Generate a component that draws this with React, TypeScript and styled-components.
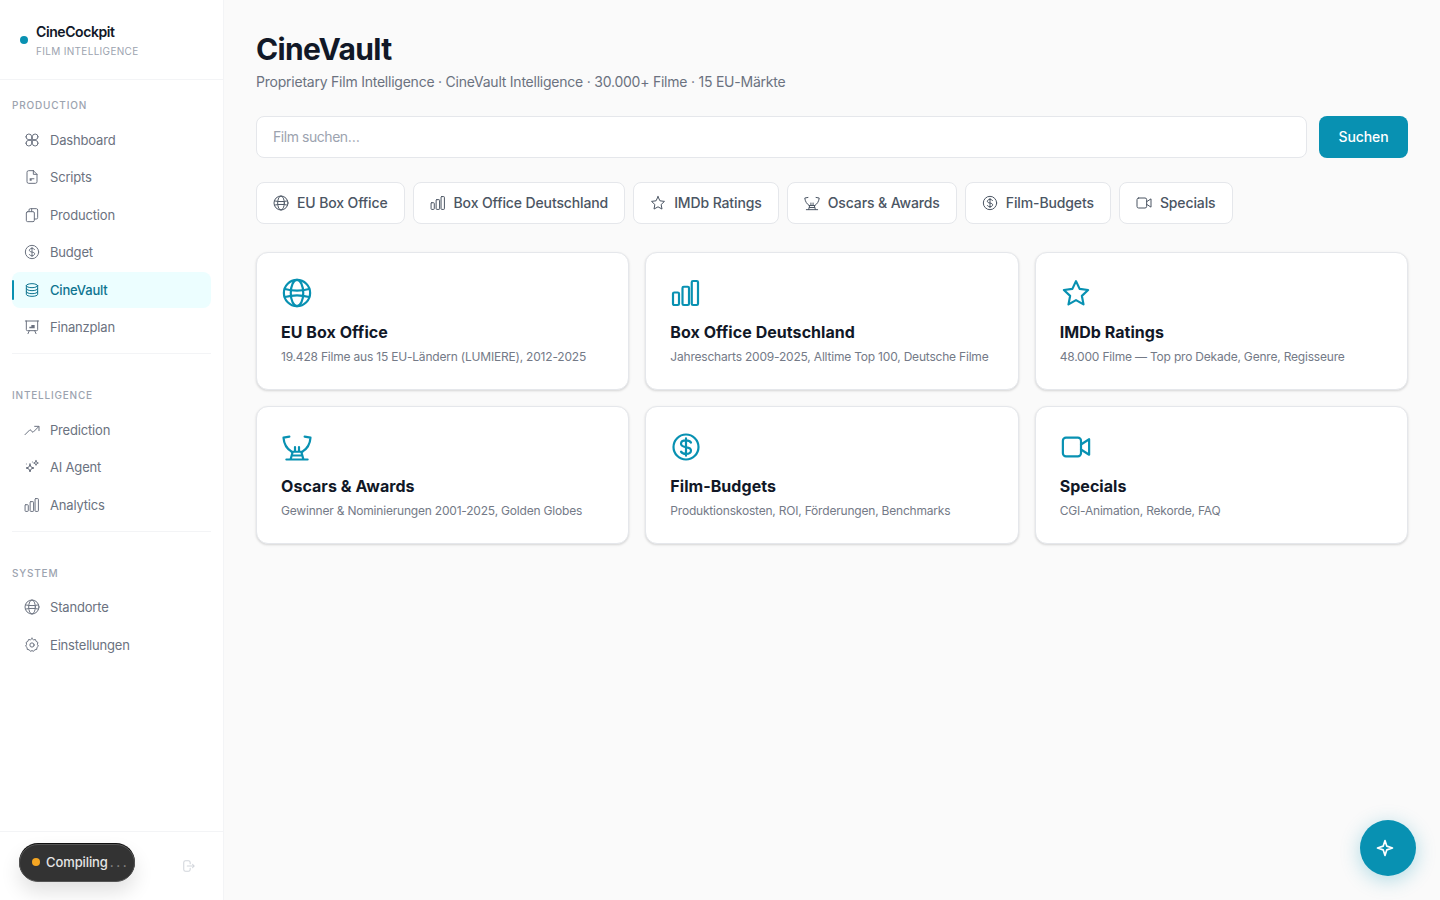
import React from "react";
import styled, { createGlobalStyle } from "styled-components";

const Global = createGlobalStyle`
  html, body { margin: 0; padding: 0; height: 100%; }
  body { font-family: Inter, "Noto Sans", sans-serif; background: #fafafa; color: #111827; }
  * { box-sizing: border-box; }
`;

type IconName =
  | "apps" | "file" | "copy" | "dollar" | "db" | "board" | "trend" | "sparks"
  | "bars" | "globe" | "gear" | "logout" | "star" | "trophy" | "video" | "spark";

const paths: Record<IconName, React.ReactNode> = {
  apps: (
    <>
      <path d="M3 7.250a4.250 4.250 0 1 1 8.500 0v4.250H7.250A4.250 4.250 0 0 1 3 7.250Z" />
      <path d="M21 7.250a4.250 4.250 0 1 0-8.500 0v4.250h4.250A4.250 4.250 0 0 0 21 7.250Z" />
      <path d="M3 16.750a4.250 4.250 0 1 0 8.500 0V12.500H7.250A4.250 4.250 0 0 0 3 16.750Z" />
      <path d="M21 16.750a4.250 4.250 0 1 1-8.500 0V12.500h4.250A4.250 4.250 0 0 1 21 16.750Z" />
    </>
  ),
  file: (
    <>
      <path d="M14 2.500H7a2.500 2.500 0 0 0-2.500 2.500v14A2.500 2.500 0 0 0 7 21.500h10a2.500 2.500 0 0 0 2.500-2.500V8L14 2.500Z" />
      <path d="M14 2.500V8h5.500" />
      <path d="M8.500 17.500v-3.500h7v1.500h-4v2Z" fill="currentColor" stroke="none" />
    </>
  ),
  copy: (
    <>
      <rect x="3.500" y="7" width="12" height="15" rx="2" />
      <path d="M7.500 7V4.500a2 2 0 0 1 2-2h9a2 2 0 0 1 2 2V16a2 2 0 0 1-2 2h-3" />
      <path d="M11.500 7V2.500" />
    </>
  ),
  dollar: (
    <>
      <circle cx="12" cy="12" r="10" />
      <path d="M16 8.500c-.6-1.100-2.100-1.800-4-1.800-2.300 0-4 1.100-4 2.700s1.600 2.300 4 2.700 4 1.100 4 2.700-1.700 2.700-4 2.700c-1.900 0-3.400-.7-4-1.800M12 5v14" />
    </>
  ),
  db: (
    <>
      <ellipse cx="12" cy="5.500" rx="8.500" ry="3" />
      <path d="M3.500 5.500v13c0 1.700 3.800 3 8.500 3s8.500-1.300 8.500-3v-13" />
      <path d="M3.500 10c0 1.700 3.800 3 8.500 3s8.500-1.300 8.500-3M3.500 14.500c0 1.700 3.800 3 8.500 3s8.500-1.300 8.500-3" />
    </>
  ),
  board: (
    <>
      <path d="M2 3h20" />
      <path d="M3.500 3v13a1.500 1.500 0 0 0 1.500 1.500h14a1.500 1.500 0 0 0 1.500-1.500V3" />
      <path d="M8 17.500 6 22M16 17.500l2 4.500" />
      <path d="M8 14v-2.500h3V9h5v5H8Z" fill="currentColor" stroke="none" />
    </>
  ),
  trend: (
    <>
      <path d="M1.500 19 9 11.500l4.500 4L22 7" />
      <path d="M16 6.500h6.500V13" />
    </>
  ),
  sparks: (
    <>
      <path d="M9 7.500l1.500 4.500L15 13.500l-4.500 1.500L9 19.500 7.500 15 3 13.500 7.500 12 9 7.500Z" />
      <path d="M18 2.500l1 2.500 2.500 1-2.500 1-1 2.500-1-2.500-2.500-1 2.500-1 1-2.500Z" />
      <path d="M3.500 7.500h.01M12.500 4.500h.01" />
    </>
  ),
  bars: (
    <>
      <rect x="1.600" y="11.600" width="4.800" height="10" rx="1" />
      <rect x="9.200" y="7" width="5.200" height="14.600" rx="1" />
      <rect x="16.600" y="2.400" width="5" height="19.200" rx="1" />
    </>
  ),
  globe: (
    <>
      <circle cx="12" cy="12" r="10.500" />
      <ellipse cx="12" cy="12" rx="5" ry="10.500" />
      <path d="M2.300 8.800c5.500 1.500 13.900 1.500 19.400 0M2.300 15.200c5.500-1.500 13.900-1.500 19.400 0" />
    </>
  ),
  gear: (
    <>
      <path d="M12 2.200l2.200 2 3-.4 1 2.800 2.600 1.500-.7 3 1.500 2.600-2.200 2-.3 3-3 .5-1.900 2.400L12 20.300l-2.200 1.300-1.900-2.400-3-.5-.3-3-2.200-2 1.500-2.600-.7-3 2.600-1.500 1-2.800 3 .4 2.200-2Z" />
      <circle cx="12" cy="12" r="3.200" />
    </>
  ),
  logout: (
    <>
      <path d="M14 8V6a3 3 0 0 0-3-3H6a3 3 0 0 0-3 3v12a3 3 0 0 0 3 3h5a3 3 0 0 0 3-3v-2" />
      <path d="M9 12h12M18 9l3 3-3 3" />
    </>
  ),
  star: (
    <path d="M12 2.500l2.900 6.200 6.800.9-5 4.700 1.300 6.800-6-3.400-6 3.400 1.300-6.800-5-4.700 6.800-.9L12 2.500Z" />
  ),
  trophy: (
    <>
      <path d="M5.900 3.700 1.200 4.500C1.500 9 4 13.500 7.700 15.700" />
      <path d="M18.100 3.700l4.700.8C22.500 9 20 13.500 16.300 15.700" />
      <path d="M7.700 15.800h8.600M10.400 12v3.800M13.600 12v3.800" />
      <path d="M8.500 16l-1.500 5.500M15.500 16l1.500 5.500M8 18.800h8M3.500 22h17" />
    </>
  ),
  video: (
    <>
      <rect x="1.500" y="4.500" width="14.500" height="15" rx="2.500" />
      <path d="M16 10l6.500-4.200v12.400L16 14" />
    </>
  ),
  spark: (
    <path d="M12 3l2.200 6.800L21 12l-6.800 2.200L12 21l-2.200-6.800L3 12l6.800-2.200L12 3Z" />
  ),
};

const Svg = styled.svg<{ $size: number; $weight: number }>`
  width: ${(p) => p.$size}px;
  height: ${(p) => p.$size}px;
  flex: none;
  fill: none;
  stroke: currentColor;
  stroke-width: ${(p) => p.$weight};
  stroke-linecap: round;
  stroke-linejoin: round;
`;

const Icon = ({ name, size = 16, weight = 1.5 }: { name: IconName; size?: number; weight?: number }) => (
  <Svg viewBox="0 0 24 24" $size={size} $weight={weight}>
    {paths[name]}
  </Svg>
);

const Page = styled.div`
  display: flex;
  width: 1440px;
  height: 900px;
  overflow: hidden;
  position: relative;
`;

const Sidebar = styled.aside`
  width: 224px;
  flex: none;
  background: #fff;
  border-right: 1px solid #f3f4f6;
  display: flex;
  flex-direction: column;
`;

const Brand = styled.div`
  height: 80px;
  flex: none;
  border-bottom: 1px solid #f3f4f6;
  display: flex;
  align-items: center;
  gap: 8px;
  padding-left: 20px;
`;

const BrandDot = styled.span`
  width: 8px;
  height: 8px;
  border-radius: 50%;
  background: #0891b2;
`;

const BrandText = styled.div`
  display: flex;
  flex-direction: column;
  gap: 2px;
  padding-top: 1px;
`;

const BrandName = styled.div`
  font-size: 14px;
  line-height: 20px;
  font-weight: 600;
  letter-spacing: -0.42px;
  color: #111827;
`;

const BrandSub = styled.div`
  font-size: 10px;
  line-height: 14px;
  letter-spacing: 0.32px;
  color: #9ca3af;
`;

const Nav = styled.nav`
  flex: 1;
  padding: 16px 12px 0;
`;

const Section = styled.section<{ $last?: boolean }>`
  padding-bottom: 7.5px;
  margin-bottom: 32px;
  border-bottom: ${(p) => (p.$last ? "none" : "1px solid #f3f4f6")};
`;

const SectionLabel = styled.div`
  font-size: 10px;
  line-height: 18px;
  font-weight: 500;
  letter-spacing: 0.8px;
  color: #9ca3af;
  margin-bottom: 8px;
`;

const NavList = styled.div`
  display: flex;
  flex-direction: column;
  gap: 1.5px;
`;

const NavItem = styled.a<{ $active?: boolean }>`
  position: relative;
  height: 36px;
  display: flex;
  align-items: center;
  gap: 10px;
  padding: 0 0 1px 12px;
  border-radius: 8px;
  font-size: 13px;
  letter-spacing: -0.18px;
  color: ${(p) => (p.$active ? "#0e7490" : "#6b7280")};
  font-weight: ${(p) => (p.$active ? 500 : 400)};
  background: ${(p) => (p.$active ? "#ecfeff" : "transparent")};
  &::before {
    content: "";
    display: ${(p) => (p.$active ? "block" : "none")};
    position: absolute;
    left: 0;
    top: 8px;
    bottom: 8px;
    width: 2px;
    background: #0891b2;
    border-radius: 1px;
  }
`;

const SideFooter = styled.div`
  height: 69px;
  flex: none;
  border-top: 1px solid #f3f4f6;
  display: flex;
  align-items: center;
  justify-content: space-between;
  padding: 0 27px 0 19px;
  color: #d1d5db;
`;

const Pill = styled.div`
  width: 116px;
  height: 38px;
  border-radius: 19px;
  background: #333;
  border: 1px solid #555;
  box-shadow: 0 10px 20px rgba(0, 0, 0, 0.12), 0 -1px 0 #111;
  display: flex;
  align-items: center;
  gap: 6px;
  padding: 0 0 1px 12px;
  margin-top: -7px;
  font-size: 13px;
  font-weight: 500;
  letter-spacing: -0.1px;
  color: #e5e5e5;
  white-space: nowrap;
`;

const PillDot = styled.span`
  width: 8px;
  height: 8px;
  border-radius: 50%;
  background: #f5a623;
`;

const Dots = styled.span`
  margin-left: 2px;
  letter-spacing: 2.6px;
  color: #8a8a8a;
`;

const LogoutWrap = styled.span`
  display: flex;
  margin-top: -1px;
`;

const Main = styled.main`
  flex: 1;
  min-width: 0;
  padding: 32px;
`;

const Title = styled.h1`
  margin: 0;
  font-size: 30px;
  line-height: 35px;
  font-weight: 700;
  letter-spacing: -0.65px;
  color: #111827;
`;

const Subtitle = styled.p`
  margin: 5px 0 0;
  font-size: 14px;
  line-height: 20px;
  letter-spacing: -0.23px;
  color: #6b7280;
`;

const SearchRow = styled.form`
  display: flex;
  gap: 12px;
  margin-top: 24px;
`;

const SearchInput = styled.input`
  flex: 1;
  height: 42px;
  border: 1px solid #e5e7eb;
  border-radius: 8px;
  background: #fff;
  padding: 0 16px 2px;
  font: 400 14px Inter, sans-serif;
  letter-spacing: -0.45px;
  color: #111827;
  outline: none;
  &::placeholder { color: #9ca3af; opacity: 1; }
`;

const SearchButton = styled.button`
  width: 89px;
  height: 42px;
  border: none;
  border-radius: 8px;
  padding: 0 0 1px;
  background: #0891b2;
  color: #fff;
  font: 500 14px Inter, sans-serif;
  letter-spacing: -0.1px;
`;

const Tabs = styled.div`
  display: flex;
  gap: 8px;
  margin-top: 24px;
`;

const Tab = styled.button`
  height: 42px;
  display: flex;
  align-items: center;
  gap: 8px;
  padding: 0 16px 1px;
  background: #fff;
  border: 1px solid #e5e7eb;
  border-radius: 8px;
  color: #4b5563;
  font: 500 14px Inter, sans-serif;
  letter-spacing: -0.12px;
`;

const Grid = styled.div`
  display: grid;
  grid-template-columns: repeat(3, 1fr);
  gap: 16px;
  margin-top: 28px;
`;

const Card = styled.article`
  height: 138px;
  padding: 24px;
  background: #fff;
  border: 1px solid #e5e7eb;
  border-radius: 12px;
  box-shadow: 0 1px 3px rgba(0, 0, 0, 0.1), 0 1px 2px rgba(0, 0, 0, 0.06);
`;

const CardIcon = styled.div`
  height: 30px;
  margin: 1px 0 0 1px;
  display: flex;
  color: #0891b2;
`;

const CardTitle = styled.h3`
  margin: 12px 0 0;
  font-size: 16px;
  line-height: 24px;
  font-weight: 700;
  letter-spacing: 0.05px;
  color: #111827;
`;

const CardDesc = styled.p`
  margin: 5px 0 0;
  font-size: 12px;
  line-height: 16px;
  letter-spacing: -0.2px;
  color: #747a87;
`;

const Fab = styled.button`
  position: absolute;
  left: 1360px;
  top: 820px;
  width: 56px;
  height: 56px;
  padding: 0 6px 0 0;
  border: none;
  border-radius: 50%;
  background: #0891b2;
  color: #fff;
  display: flex;
  align-items: center;
  justify-content: center;
  box-shadow: 0 4px 20px rgba(8, 145, 178, 0.3);
`;

const navSections: { label: string; items: { name: string; icon: IconName; active?: boolean }[] }[] = [
  {
    label: "PRODUCTION",
    items: [
      { name: "Dashboard", icon: "apps" },
      { name: "Scripts", icon: "file" },
      { name: "Production", icon: "copy" },
      { name: "Budget", icon: "dollar" },
      { name: "CineVault", icon: "db", active: true },
      { name: "Finanzplan", icon: "board" },
    ],
  },
  {
    label: "INTELLIGENCE",
    items: [
      { name: "Prediction", icon: "trend" },
      { name: "AI Agent", icon: "sparks" },
      { name: "Analytics", icon: "bars" },
    ],
  },
  {
    label: "SYSTEM",
    items: [
      { name: "Standorte", icon: "globe" },
      { name: "Einstellungen", icon: "gear" },
    ],
  },
];

const cards: { title: string; desc: string; icon: IconName }[] = [
  { title: "EU Box Office", desc: "19.428 Filme aus 15 EU-Ländern (LUMIERE), 2012-2025", icon: "globe" },
  { title: "Box Office Deutschland", desc: "Jahrescharts 2009-2025, Alltime Top 100, Deutsche Filme", icon: "bars" },
  { title: "IMDb Ratings", desc: "48.000 Filme — Top pro Dekade, Genre, Regisseure", icon: "star" },
  { title: "Oscars & Awards", desc: "Gewinner & Nominierungen 2001-2025, Golden Globes", icon: "trophy" },
  { title: "Film-Budgets", desc: "Produktionskosten, ROI, Förderungen, Benchmarks", icon: "dollar" },
  { title: "Specials", desc: "CGI-Animation, Rekorde, FAQ", icon: "video" },
];

export default function App() {
  return (
    <Page>
      <Global />
      <Sidebar>
        <Brand>
          <BrandDot />
          <BrandText>
            <BrandName>CineCockpit</BrandName>
            <BrandSub>FILM INTELLIGENCE</BrandSub>
          </BrandText>
        </Brand>
        <Nav>
          {navSections.map((s, i) => (
            <Section key={s.label} $last={i === navSections.length - 1}>
              <SectionLabel>{s.label}</SectionLabel>
              <NavList>
                {s.items.map((it) => (
                  <NavItem key={it.name} $active={it.active}>
                    <Icon name={it.icon} />
                    {it.name}
                  </NavItem>
                ))}
              </NavList>
            </Section>
          ))}
        </Nav>
        <SideFooter>
          <Pill>
            <PillDot />
            <span>
              Compiling<Dots>...</Dots>
            </span>
          </Pill>
          <LogoutWrap>
            <Icon name="logout" size={14} weight={1.8} />
          </LogoutWrap>
        </SideFooter>
      </Sidebar>
      <Main>
        <Title>CineVault</Title>
        <Subtitle>Proprietary Film Intelligence · CineVault Intelligence · 30.000+ Filme · 15 EU-Märkte</Subtitle>
        <SearchRow>
          <SearchInput placeholder="Film suchen…" />
          <SearchButton type="button">Suchen</SearchButton>
        </SearchRow>
        <Tabs>
          {cards.map((c) => (
            <Tab key={c.title} type="button">
              <Icon name={c.icon} />
              {c.title}
            </Tab>
          ))}
        </Tabs>
        <Grid>
          {cards.map((c) => (
            <Card key={c.title}>
              <CardIcon>
                <Icon name={c.icon} size={30} weight={1.75} />
              </CardIcon>
              <CardTitle>{c.title}</CardTitle>
              <CardDesc>{c.desc}</CardDesc>
            </Card>
          ))}
        </Grid>
      </Main>
      <Fab type="button" aria-label="AI">
        <Icon name="spark" size={20} weight={2} />
      </Fab>
    </Page>
  );
}
